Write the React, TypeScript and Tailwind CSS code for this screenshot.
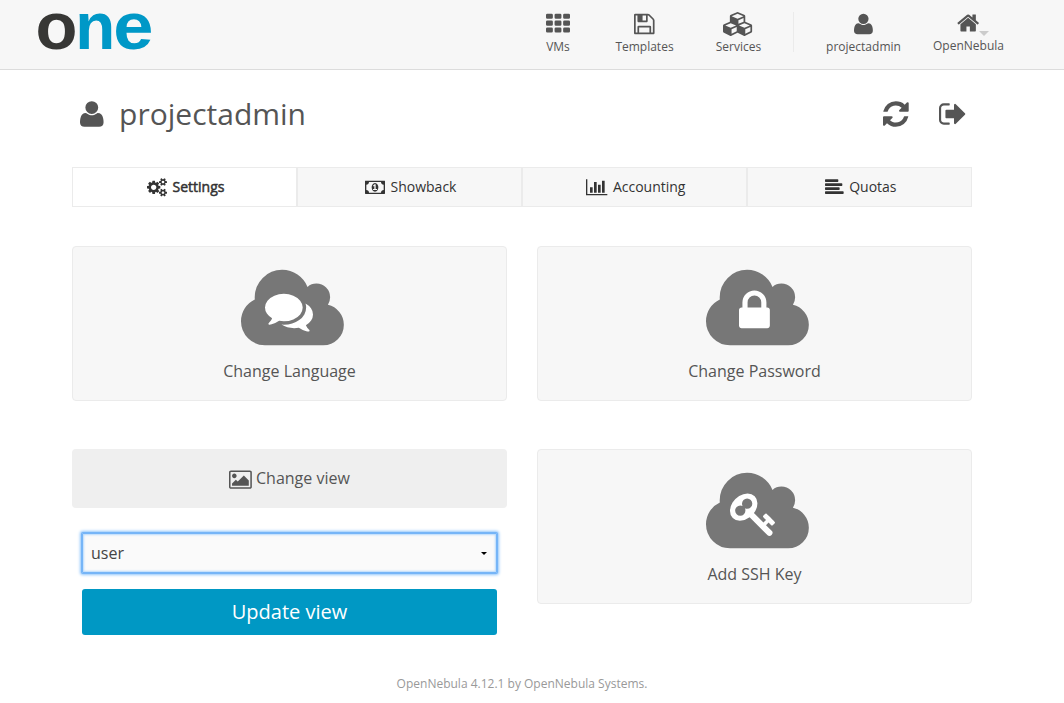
import React from "react";

type Glyph = { w: number; x?: number; flip?: boolean; d: string };

const row = (x: number, y: number, w: number, h: number, r: number) =>
  `M${x + r} ${y}h${w - 2 * r}a${r} ${r} 0 0 1 ${r} ${r}v${h - 2 * r}a${r} ${r} 0 0 1 -${r} ${r}h-${w - 2 * r}a${r} ${r} 0 0 1 -${r} -${r}v-${h - 2 * r}a${r} ${r} 0 0 1 ${r} -${r}z`;

const glyphs: Record<string, Glyph> = {
  grid: {
    w: 1792,
    d: [0, 640, 1280].flatMap((x) => [128, 640, 1152].map((y) => row(x, y, 512, 384, 96))).join(""),
  },
  user: {
    w: 1408,
    flip: true,
    d: "M1408 131q0 -120 -73 -189.5t-194 -69.5h-874q-121 0 -194 69.5t-73 189.5q0 53 3.5 103.5t14 109t26.5 108.5t43 97.5t62 81t85.5 53.5t111.5 20q9 0 42 -21.5t74.5 -48t108 -48t133.5 -21.5t133.5 21.5t108 48t74.5 48t42 21.5q61 0 111.5 -20t85.5 -53.5t62 -81t43 -97.5t26.5 -108.5t14 -109t3.5 -103.5zM1088 1024q0 -159 -112.5 -271.5t-271.5 -112.5t-271.5 112.5t-112.5 271.5t112.5 271.5t271.5 112.5t271.5 -112.5t112.5 -271.5z",
  },
  floppy: {
    w: 1536,
    x: 128,
    d: "M512 1536h768v-384h-768v384zm896 0h128v-896q0-14-10-38.5t-20-34.5l-281-281q-10-10-34-20t-39-10v416q0 40-28 68t-68 28h-576q-40 0-68-28t-28-68v-416h-128v1280h128v-416q0-40 28-68t68-28h832q40 0 68 28t28 68v416zm-384-928v-320q0-13-9.5-22.5t-22.5-9.5h-192q-13 0-22.5 9.5t-9.5 22.5v320q0 13 9.5 22.5t22.5 9.5h192q13 0 22.5-9.5t9.5-22.5zm640 32v928q0 40-28 68t-68 28h-1344q-40 0-68-28t-28-68v-1344q0-40 28-68t68-28h928q40 0 88 20t76 48l280 280q28 28 48 76t20 88z",
  },
  cubes: {
    w: 2304,
    d: "M640 1632l384-192v-314l-384 164v342zm-64-454l404-173-404-173-404 173zm1088 454l384-192v-314l-384 164v342zm-64-454l404-173-404-173-404 173zm-448-293l384-165v-266l-384 164v267zm-64-379l441-189-441-189-441 189zm1088 518v416q0 36-19 67t-52 47l-448 224q-25 14-57 14t-57-14l-448-224q-4-2-7-4-2 2-7 4l-448 224q-25 14-57 14t-57-14l-448-224q-33-16-52-47t-19-67v-416q0-38 21.5-70t56.5-48l434-186v-400q0-38 21.5-70t56.5-48l448-192q23-10 50-10t50 10l448 192q35 16 56.5 48t21.5 70v400l434 186q36 16 57 48t21 70z",
  },
  home: {
    w: 1664,
    x: 64,
    d: "M1472 992v480q0 26-19 45t-45 19h-384v-384h-256v384h-384q-26 0-45-19t-19-45v-480q0-1 .5-3t.5-3l575-474 575 474q1 2 1 6zm223-69l-62 74q-8 9-21 11h-3q-13 0-21-7l-692-577-692 577q-12 8-24 7-13-2-21-11l-62-74q-8-10-7-23.5t11-21.5l719-599q32-26 76-26t76 26l244 204v-195q0-14 9-23t23-9h192q14 0 23 9t9 23v408l219 182q10 8 11 21.5t-7 23.5z",
  },
  refresh: {
    w: 1536,
    x: 128,
    d: "M1639 1056q0 5-1 7-64 268-268 434.5t-478 166.5q-146 0-282.5-55t-243.5-157l-129 129q-19 19-45 19t-45-19-19-45v-448q0-26 19-45t45-19h448q26 0 45 19t19 45-19 45l-137 137q71 66 161 102t187 36q134 0 250-65t186-179q11-17 53-117 8-23 30-23h192q13 0 22.5 9.5t9.5 22.5zm25-800v448q0 26-19 45t-45 19h-448q-26 0-45-19t-19-45 19-45l138-138q-148-137-349-137-134 0-250 65t-186 179q-11 17-53 117-8 23-30 23h-199q-13 0-22.5-9.5t-9.5-22.5v-7q65-268 270-434.5t480-166.5q146 0 284 55.5t245 156.5l130-129q19-19 45-19t45 19 19 45z",
  },
  signOut: {
    w: 1600,
    x: 64,
    d: "M704 1440q0 4 1 20t.5 26.5-3 23.5-10 19.5-20.5 6.5h-320q-119 0-203.5-84.5t-84.5-203.5v-704q0-119 84.5-203.5t203.5-84.5h320q13 0 22.5 9.5t9.5 22.5q0 4 1 20t.5 26.5-3 23.5-10 19.5-20.5 6.5h-320q-66 0-113 47t-47 113v704q0 66 47 113t113 47h312l11.5 1 11.5 3 8 5.5 7 9 2 13.5zm928-544q0 26-19 45l-544 544q-19 19-45 19t-45-19-19-45v-288h-448q-26 0-45-19t-19-45v-384q0-26 19-45t45-19h448v-288q0-26 19-45t45-19 45 19l544 544q19 19 19 45z",
  },
  cogs: {
    w: 1920,
    d: "M896 896q0-106-75-181t-181-75-181 75-75 181 75 181 181 75 181-75 75-181zm768 512q0-52-38-90t-90-38-90 38-38 90q0 53 37.5 90.5t90.5 37.5 90.5-37.5 37.5-90.5zm0-1024q0-52-38-90t-90-38-90 38-38 90q0 53 37.5 90.5t90.5 37.5 90.5-37.5 37.5-90.5zm-384 421v185q0 10-7 19.5t-16 10.5l-155 24q-11 35-32 76 34 48 90 115 7 11 7 20 0 12-7 19-23 30-82.5 89.5t-78.5 59.5q-11 0-21-7l-115-90q-37 19-77 31-11 108-23 155-7 24-30 24h-186q-11 0-20-7.5t-10-17.5l-23-153q-34-10-75-31l-118 89q-7 7-20 7-11 0-21-8-144-133-144-160 0-9 7-19 10-14 41-53t47-61q-23-44-35-82l-152-24q-10-1-17-9.5t-7-19.5v-185q0-10 7-19.5t16-10.5l155-24q11-35 32-76-34-48-90-115-7-11-7-20 0-12 7-20 22-30 82-89t79-59q11 0 21 7l115 90q34-18 77-32 11-108 23-154 7-24 30-24h186q11 0 20 7.5t10 17.5l23 153q34 10 75 31l118-89q8-7 20-7 11 0 21 8 144 133 144 160 0 8-7 19-12 16-42 54t-45 60q23 48 34 82l152 23q10 2 17 10.5t7 19.5zm640 533v140q0 16-149 31-12 27-30 52 51 113 51 138 0 4-4 7-122 71-124 71-8 0-46-47t-52-68q-20 2-30 2t-30-2q-14 21-52 68t-46 47q-2 0-124-71-4-3-4-7 0-25 51-138-18-25-30-52-149-15-149-31v-140q0-16 149-31 13-29 30-52-51-113-51-138 0-4 4-7 4-2 35-20t59-34 30-16q8 0 46 46.5t52 67.5q20-2 30-2t30 2q51-71 92-112l6-2q4 0 124 70 4 3 4 7 0 25-51 138 17 23 30 52 149 15 149 31zm0-1024v140q0 16-149 31-12 27-30 52 51 113 51 138 0 4-4 7-122 71-124 71-8 0-46-47t-52-68q-20 2-30 2t-30-2q-14 21-52 68t-46 47q-2 0-124-71-4-3-4-7 0-25 51-138-18-25-30-52-149-15-149-31v-140q0-16 149-31 13-29 30-52-51-113-51-138 0-4 4-7 4-2 35-20t59-34 30-16q8 0 46 46.5t52 67.5q20-2 30-2t30 2q51-71 92-112l6-2q4 0 124 70 4 3 4 7 0 25-51 138 17 23 30 52 149 15 149 31z",
  },
  money: {
    w: 1920,
    d: "M768 1152h384v-96h-128v-448h-114l-148 137 77 80q42-37 55-57h2v288h-128v96zm512-256q0 70-21 142t-59.5 134-101.5 101-138 39-138-39-101.5-101-59.5-134-21-142 21-142 59.5-134 101.5-101 138-39 138 39 101.5 101 59.5 134 21 142zm512 256v-512q-106 0-181-75t-75-181h-1152q0 106-75 181t-181 75v512q106 0 181 75t75 181h1152q0-106 75-181t181-75zm128-832v1152q0 26-19 45t-45 19h-1792q-26 0-45-19t-19-45v-1152q0-26 19-45t45-19h1792q26 0 45 19t19 45z",
  },
  chart: {
    w: 2048,
    d: "M640 896v512h-256v-512h256zm384-512v1024h-256v-1024h256zm1024 1152v128h-2048v-1536h128v1408h1920zm-640-896v768h-256v-768h256zm384-384v1152h-256v-1152h256z",
  },
  alignLeft: {
    w: 1792,
    d: row(0, 128, 1280, 256, 64) + row(0, 512, 1664, 256, 64) + row(0, 896, 1408, 256, 64) + row(0, 1280, 1792, 256, 64),
  },
  picture: {
    w: 1920,
    x: -64,
    d: "M576 576q0 80-56 136t-136 56-136-56-56-136 56-136 136-56 136 56 56 136zm1024 384v448h-1408v-192l320-320 160 160 512-512zm96-704h-1600q-13 0-22.5 9.5t-9.5 22.5v1216q0 13 9.5 22.5t22.5 9.5h1600q13 0 22.5-9.5t9.5-22.5v-1216q0-13-9.5-22.5t-22.5-9.5zm160 32v1216q0 66-47 113t-113 47h-1600q-66 0-113-47t-47-113v-1216q0-66 47-113t113-47h1600q66 0 113 47t47 113z",
  },
  cloud: {
    w: 1920,
    d: "M1920 1152q0 159-112.5 271.5t-271.5 112.5h-1088q-185 0-316.5-131.5t-131.5-316.5q0-132 71-241.5t187-163.5q-2-28-2-43 0-212 150-362t362-150q158 0 286.5 88t187.5 230q70-62 166-62 106 0 181 75t75 181q0 75-41 138 129 30 213 134.5t84 239.5z",
  },
  comments: {
    w: 1792,
    d: "M1408 768q0 139-94 257t-256.5 186.5-353.5 68.5q-86 0-176-16-124 88-278 128-36 9-86 16h-3q-11 0-20.5-8t-11.5-21q-1-3-1-6.5t.5-6.5 2-6l2.5-5 3.5-5.5 4-5 4.5-5 4-4.5q5-6 23-25t26-29.5 22.5-29 25-38.5 20.5-44q-124-72-195-177t-71-224q0-139 94-257t256.5-186.5 353.5-68.5 353.5 68.5 256.5 186.5 94 257zm384 256q0 120-71 224.5t-195 176.5q10 24 20.5 44t25 38.5 22.5 29 26 29.5 23 25q1 1 4 4.5t4.5 5 4 5 3.5 5.5l2.5 5 2 6 .5 6.5-1 6.5q-3 14-13 22t-22 7q-50-7-86-16-154-40-278-128-90 16-176 16-271 0-472-132 58 4 88 4 161 0 309-45t264-129q125-92 192-212t67-254q0-77-23-152 129 71 204 178t75 230z",
  },
  lock: {
    w: 1152,
    x: 320,
    d: "M640 768h512v-192q0-106-75-181t-181-75-181 75-75 181v192zm832 96v576q0 40-28 68t-68 28h-960q-40 0-68-28t-28-68v-576q0-40 28-68t68-28h32v-192q0-184 132-316t316-132 316 132 132 316v192h32q40 0 68 28t28 68z",
  },
  key: {
    w: 1792,
    d: "M832 512q0-80-56-136t-136-56-136 56-56 136q0 42 19 83-41-19-83-19-80 0-136 56t-56 136 56 136 136 56 136-56 56-136q0-42-19-83 41 19 83 19 80 0 136-56t56-136zm851 704q0 17-49 66t-66 49q-9 0-28.5-16t-36.5-33-38.5-40-24.5-26l-96 96 220 220q28 28 28 68 0 42-39 81t-81 39q-40 0-68-28l-671-671q-176 131-365 131-163 0-265.5-102.5t-102.5-265.5q0-160 95-313t248-248 313-95q163 0 265.5 102.5t102.5 265.5q0 189-131 365l355 355 96-96q-3-3-26-24.5t-40-38.5-33-36.5-16-28.5q0-17 49-66t66-49q13 0 23 10 6 6 46 44.5t82 79.5 86.5 86 73 78 28.5 41z",
  },
};

function Icon({ name, size, className = "" }: { name: string; size: number; className?: string }) {
  const g = glyphs[name];
  return (
    <svg
      width={(g.w * size) / 1792}
      height={size}
      viewBox={`${g.x ?? 0} 0 ${g.w} 1792`}
      fill="currentColor"
      className={`shrink-0 overflow-visible ${className}`}
      aria-hidden="true"
    >
      <path d={g.d} transform={g.flip ? "translate(0 1536) scale(1 -1)" : undefined} />
    </svg>
  );
}

function Logo() {
  return (
    <svg width="120" height="69" viewBox="0 0 120 69" className="ml-[36px] overflow-visible font-['Liberation_Sans',sans-serif] text-[66px] font-bold">
      <text x="-0.4" y="49" textLength="42" lengthAdjust="spacingAndGlyphs" fill="#373735">o</text>
      <text x="39.3" y="48.7" textLength="40" lengthAdjust="spacingAndGlyphs" fill="#0098c7">n</text>
      <text x="77.3" y="49" textLength="40.2" lengthAdjust="spacingAndGlyphs" fill="#0098c7">e</text>
    </svg>
  );
}

function NavItem({ icon, label, className }: { icon: string; label: string; className: string }) {
  return (
    <a className={`flex flex-col items-center whitespace-nowrap text-xs leading-4 ${className}`}>
      <Icon name={icon} size={24} />
      <span className="mt-[3px]">{label}</span>
    </a>
  );
}

function Card({ icon, label, iconClass }: { icon: string; label: string; iconClass: string }) {
  return (
    <button className="flex h-[155px] w-full flex-col items-center rounded border border-[#ebebeb] bg-[#f7f7f7] pt-[15.5px]">
      <span className="relative ml-[6px] block text-[#777]">
        <Icon name="cloud" size={96} />
        <Icon name={icon} size={48} className={`absolute top-6 text-white ${iconClass}`} />
      </span>
      <span className="mt-[0.5px] text-base leading-6">{label}</span>
    </button>
  );
}

const tabs = [
  { icon: "cogs", label: "Settings" },
  { icon: "money", label: "Showback" },
  { icon: "chart", label: "Accounting" },
  { icon: "alignLeft", label: "Quotas" },
];

export default function App() {
  return (
    <div className="h-[703px] w-[1064px] overflow-hidden bg-white font-['Open_Sans',sans-serif] text-[#555]">
      <header className="flex h-[70px] items-start border-b border-[#dcdcdc] bg-[#f7f7f7]">
        <Logo />
        <nav className="ml-[378px] flex items-start pt-[11.5px]">
          <NavItem icon="grid" label="VMs" className="w-12" />
          <NavItem icon="floppy" label="Templates" className="ml-6 w-[77px]" />
          <NavItem icon="cubes" label="Services" className="ml-[27px] w-[57px]" />
          <span className="ml-[26px] h-10 w-px bg-[#ebebeb]" />
          <NavItem icon="user" label="projectadmin" className="ml-[26px] w-[87px]" />
          <div className="relative ml-[21px] w-[81px]">
            <NavItem icon="home" label="OpenNebula" className="-mt-px w-[81px]" />
            <span className="absolute left-[51px] top-[19.5px] border-x-[5px] border-t-[5px] border-x-transparent border-t-[#ccc]" />
          </div>
        </nav>
      </header>

      <main className="ml-[72px] w-[900px]">
        <div className="flex h-[97px] items-start pt-[22px]">
          <Icon name="user" size={30} className="ml-[7.5px] mt-[7px]" />
          <h1 className="ml-4 text-[30px] leading-[44px]">projectadmin</h1>
          <div className="ml-auto mr-[6px] mt-[7px] flex gap-[31px]">
            <Icon name="refresh" size={30} />
            <Icon name="signOut" size={30} />
          </div>
        </div>

        <div className="grid h-10 grid-cols-4 text-sm text-[#333]">
          {tabs.map((t, i) => (
            <button
              key={t.label}
              className={`flex items-center justify-center gap-[6px] border border-[#ebebeb] pl-[2px] ${i === 0 ? "bg-white [-webkit-text-stroke:0.5px_#333]" : "bg-[#f7f7f7]"}`}
            >
              <Icon name={t.icon} size={18.67} />
              <span>{t.label}</span>
            </button>
          ))}
        </div>

        <div className="mt-[39px] grid grid-cols-2 gap-[30px]">
          <Card icon="comments" label="Change Language" iconClass="left-6" />
          <Card icon="lock" label="Change Password" iconClass="left-[32.5px]" />
        </div>

        <div className="mt-12 grid grid-cols-2 gap-[30px]">
          <div>
            <button className="flex h-[59px] w-full items-center justify-center gap-1 rounded bg-[#efefef] text-base">
              <Icon name="picture" size={21.33} className="mt-[2px]" />
              <span className="-mt-[2px]">Change view</span>
            </button>
            <div className="mx-[10px] mt-[25px] flex h-10 items-center justify-between rounded-[1px] bg-[#fafafa] pl-[9px] pr-[10px] text-base text-[#444] shadow-[0_0_0_1px_#76b5f7,inset_0_0_0_1px_#76b5f7,0_0_3px_2px_#8fc5fb,inset_0_0_2px_2px_#b6d9fc]">
              <span>user</span>
              <span className="border-x-[3px] border-t-[3px] border-x-transparent border-t-black" />
            </div>
            <button className="mx-[10px] mt-4 block h-[46px] w-[415px] rounded-[3px] bg-[#0098c4] text-xl text-white">
              Update view
            </button>
          </div>
          <Card icon="key" label="Add SSH Key" iconClass="left-6" />
        </div>
      </main>

      <footer className="mt-[41px] pr-5 text-center text-xs leading-4 text-[#999]">
        OpenNebula 4.12.1 by OpenNebula Systems.
      </footer>
    </div>
  );
}
